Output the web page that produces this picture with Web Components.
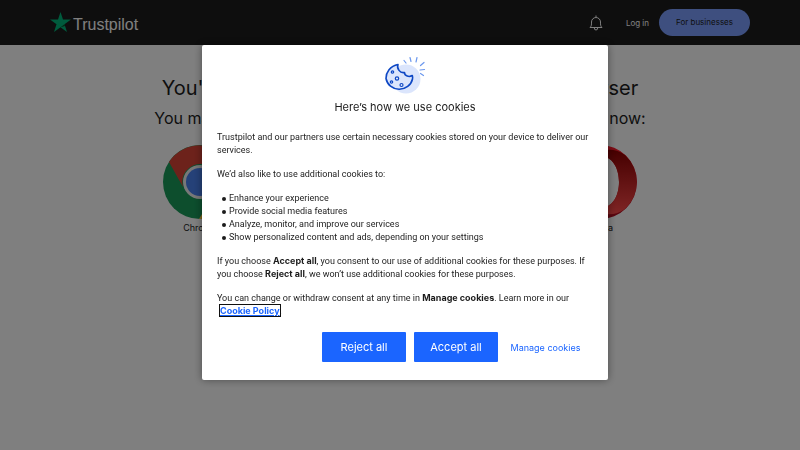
<!DOCTYPE html>
<html lang="en">
<head>
<meta charset="utf-8">
<meta name="viewport" content="width=device-width, initial-scale=1">
<title>Trustpilot</title>
<style>
    body {
        margin: 0;
        min-height: 100vh;
        background: #fff;
        color: #1c1c1c;
        font-family: Inter, "Liberation Sans", sans-serif;
    }
</style>
</head>
<body>
<tp-header></tp-header>
<tp-browsers>
    <span slot="title">You're using an old and unsupported web browser</span>
    <span slot="text">You may want to switch to one of these browsers and log in now:</span>
    <tp-browser>
        <svg slot="icon" viewBox="0 0 74 74" aria-hidden="true">
            <circle cx="37" cy="37" r="37" fill="#1a9c5b"/>
            <path d="M6 17A37 37 0 0 1 69 19H37A18 18 0 0 0 20 42Z" fill="#db4437"/>
            <path d="M69 19A37 37 0 0 1 36 74L53 46A18 18 0 0 0 37 19Z" fill="#ffcd40"/>
            <circle cx="37" cy="37" r="17" fill="#f1f1f1"/>
            <circle cx="37" cy="37" r="14" fill="#4a82f0"/>
        </svg>
        Chrome
    </tp-browser>
    <tp-browser>
        <svg slot="icon" viewBox="0 0 74 74" aria-hidden="true">
            <circle cx="37" cy="37" r="37" fill="#ff9400"/>
            <circle cx="39" cy="35" r="22" fill="#20306d"/>
        </svg>
        Firefox
    </tp-browser>
    <tp-browser>
        <svg slot="icon" viewBox="0 0 74 74" aria-hidden="true">
            <circle cx="37" cy="37" r="37" fill="#1e9bf0"/>
            <path d="M58 16L32 32L42 42Z" fill="#f33"/>
            <path d="M16 58L32 32L42 42Z" fill="#fff"/>
        </svg>
        Safari
    </tp-browser>
    <tp-browser>
        <svg slot="icon" viewBox="0 0 74 74" aria-hidden="true">
            <defs>
                <linearGradient id="ring" x2="0" y2="1">
                    <stop offset="0" stop-color="#ff1b2d"/>
                    <stop offset="1" stop-color="#b00d20"/>
                </linearGradient>
                <linearGradient id="side" x2="0" y2="1">
                    <stop offset="0" stop-color="#8c0000"/>
                    <stop offset="1" stop-color="#ff4b4b"/>
                </linearGradient>
            </defs>
            <path fill-rule="evenodd" d="M37 0A37 37 0 1 0 37 74A37 37 0 1 0 37 0ZM37 11C50 11 56 24 56 37S50 63 37 63S18 50 18 37S24 11 37 11Z" fill="url(#ring)"/>
            <path d="M25 16C33 4 50 1 62 10A37 37 0 0 1 62 64C50 73 33 70 25 58C29 62 33 63 37 63C50 63 56 50 56 37S50 11 37 11C33 11 29 12 25 16Z" fill="url(#side)"/>
        </svg>
        Opera
    </tp-browser>
</tp-browsers>
<cookie-dialog>
    <span slot="title">Here’s how we use cookies</span>
    <p>Trustpilot and our partners use certain necessary cookies stored on your device to deliver our services.</p>
    <p>We’d also like to use additional cookies to:</p>
    <cookie-list>
        <li>Enhance your experience</li>
        <li>Provide social media features</li>
        <li>Analyze, monitor, and improve our services</li>
        <li>Show personalized content and ads, depending on your settings</li>
    </cookie-list>
    <p>If you choose <strong-term>Accept all</strong-term>, you consent to our use of additional cookies for these purposes. If you choose <strong-term>Reject all</strong-term>, we won’t use additional cookies for these purposes.</p>
    <p>You can change or withdraw consent at any time in <strong-term>Manage cookies</strong-term>. Learn more in our <policy-link href="#cookies">Cookie Policy</policy-link>.</p>
    <cookie-button slot="actions">Reject all</cookie-button>
    <cookie-button slot="actions">Accept all</cookie-button>
    <cookie-button slot="actions" plain>Manage cookies</cookie-button>
</cookie-dialog>

<script>
class TpHeader extends HTMLElement {
    constructor() {
        super();
        this.attachShadow({ mode: 'open' });
        this.shadowRoot.innerHTML = `
        <style>
            :host {
                display: block;
                background: #1c1c1c;
                color: #fff;
            }
            header {
                display: flex;
                align-items: center;
                justify-content: space-between;
                height: 45px;
                padding: 0 50px;
            }
            a {
                color: inherit;
                text-decoration: none;
            }
            .logo {
                display: flex;
                align-items: center;
                gap: 2px;
                padding-top: 2px;
                font: 16px/20px "Liberation Sans", Arial, sans-serif;
            }
            .logo svg {
                width: 21px;
                height: 20px;
                margin-bottom: 4px;
            }
            .logo span {
                padding-top: 3px;
            }
            nav {
                display: flex;
                align-items: center;
                font-size: 8px;
            }
            .bell {
                padding: 0;
                border: 0;
                background: none;
                color: inherit;
                line-height: 0;
            }
            .bell svg {
                width: 14px;
                height: 16px;
            }
            .login {
                margin: 0 10px 0 23px;
            }
            .business {
                padding: 0 17px;
                border-radius: 14px;
                background: #7c9fff;
                color: #1c1c1c;
                line-height: 27px;
            }
        </style>
        <header>
            <a class="logo" href="#home">
                <svg viewBox="0 0 21 20" aria-hidden="true">
                    <path fill="#00b67a" d="M10.5 0L13 7.6H21L14.5 12.3L17 20L10.5 15.3L4 20L6.5 12.3L0 7.6H8Z"/>
                    <path fill="#005128" d="M14.5 12.3L15.1 14L10.5 15.3Z"/>
                </svg>
                <span>Trustpilot</span>
            </a>
            <nav>
                <button class="bell" aria-label="Notifications">
                    <svg viewBox="0 0 14 16" fill="none" stroke="currentColor" aria-hidden="true">
                        <path d="M7 .5V2M1 12.5H13C11.5 11 11.5 10 11.5 7A4.5 4.5 0 0 0 2.5 7C2.5 10 2.5 11 1 12.5ZM5.3 13A1.7 2 0 0 0 8.7 13"/>
                    </svg>
                </button>
                <a class="login" href="#login">Log in</a>
                <a class="business" href="#business">For businesses</a>
            </nav>
        </header>
        `;
    }
}

class TpBrowsers extends HTMLElement {
    constructor() {
        super();
        this.attachShadow({ mode: 'open' });
        this.shadowRoot.innerHTML = `
        <style>
            :host {
                display: flex;
                flex-direction: column;
                align-items: center;
                padding-top: 30px;
                text-align: center;
            }
            h1, h2 {
                margin: 0;
                font-weight: 400;
            }
            h1 {
                font-size: 20px;
                line-height: 26px;
            }
            h2 {
                margin-top: 6px;
                font-size: 16px;
                line-height: 22px;
            }
            .row {
                display: flex;
                justify-content: space-between;
                width: 474px;
                max-width: 100%;
                margin-top: 16px;
            }
        </style>
        <h1><slot name="title"></slot></h1>
        <h2><slot name="text"></slot></h2>
        <div class="row"><slot></slot></div>
        `;
    }
}

class TpBrowser extends HTMLElement {
    constructor() {
        super();
        this.attachShadow({ mode: 'open' });
        this.shadowRoot.innerHTML = `
        <style>
            :host {
                display: flex;
                flex-direction: column;
                gap: 3px;
                width: 74px;
                font-size: 9px;
                line-height: 12px;
            }
            ::slotted(svg) {
                display: block;
                width: 74px;
                height: 74px;
            }
        </style>
        <slot name="icon"></slot>
        <div><slot></slot></div>
        `;
    }
}

class CookieDialog extends HTMLElement {
    constructor() {
        super();
        this.attachShadow({ mode: 'open' });
        this.shadowRoot.innerHTML = `
        <style>
            :host {
                position: fixed;
                inset: 0;
                display: grid;
                justify-content: center;
                align-items: start;
                padding: 10vh 0 0 10px;
                background: rgba(0, 0, 0, 0.5);
            }
            .dialog {
                box-sizing: border-box;
                width: 406px;
                max-width: 100%;
                padding: 11px 15px 18px;
                border-radius: 2px;
                background: #fff;
                box-shadow: 0 0 8px rgba(0, 0, 0, 0.4);
            }
            .cookie {
                display: block;
                width: 42px;
                height: 39px;
                margin: 0 auto;
            }
            h2 {
                margin: 4px 0 16px;
                font-size: 11px;
                font-weight: 400;
                line-height: 16px;
                text-align: center;
            }
            .text {
                display: flex;
                flex-direction: column;
                gap: 11px;
                font-family: Roboto, sans-serif;
                font-size: 9px;
                line-height: 13px;
            }
            ::slotted(p) {
                margin: 0;
            }
            .actions {
                display: flex;
                justify-content: flex-end;
                gap: 8px;
                margin-top: 14px;
            }
        </style>
        <section class="dialog" role="dialog" aria-modal="true" aria-labelledby="title">
            <svg class="cookie" viewBox="0 0 42 39" fill="none" aria-hidden="true">
                <circle cx="22" cy="23" r="14.5" fill="#dbe5fc"/>
                <path d="M14 8.5C6 10 2 16.500 2 22.500A13.500 13 0 0 0 28.500 23C28.800 21.500 28.600 20.500 28.300 19.500C25 21.500 20.500 20 20.500 16.500C16 17.500 12.500 12.500 14 8.500Z" fill="#dbe5fc" stroke="#0d47c4" stroke-width="1.6" stroke-linejoin="round"/>
                <g stroke="#0d47c4" stroke-width="1.2">
                    <circle cx="8.5" cy="16" r="1.2"/>
                    <circle cx="13" cy="22.500" r="1.700"/>
                    <circle cx="7.500" cy="26" r="1.200"/>
                    <circle cx="17.500" cy="29" r="1.500"/>
                </g>
                <path d="M20 4.500L22 7M26 1.500L27 5.500M33 1.500L32 6M40 6.500L36.500 9.500M36 14L40.500 13.500M36.500 17.500L39.500 19.500" stroke="#6c98ee" stroke-width="1.2" stroke-linecap="round"/>
            </svg>
            <h2 id="title"><slot name="title"></slot></h2>
            <div class="text"><slot></slot></div>
            <div class="actions"><slot name="actions"></slot></div>
        </section>
        `;
    }
}

class CookieList extends HTMLElement {
    constructor() {
        super();
        this.attachShadow({ mode: 'open' });
        this.shadowRoot.innerHTML = `
        <style>
            :host {
                display: block;
            }
            ul {
                margin: 0;
                padding-left: 5px;
            }
            ::slotted(li) {
                display: flex;
                align-items: center;
                gap: 3px;
            }
            ::slotted(li)::before {
                content: "";
                width: 4px;
                height: 4px;
                border-radius: 50%;
                background: currentColor;
            }
        </style>
        <ul><slot></slot></ul>
        `;
    }
}

class StrongTerm extends HTMLElement {
    constructor() {
        super();
        this.attachShadow({ mode: 'open' });
        this.shadowRoot.innerHTML = `
        <style>
            b {
                font-family: Inter, sans-serif;
                line-height: 1;
            }
        </style>
        <b><slot></slot></b>`;
    }
}

class PolicyLink extends HTMLElement {
    constructor() {
        super();
        this.attachShadow({ mode: 'open' });
        this.shadowRoot.innerHTML = `
        <style>
            :host {
                margin-left: 3px;
                white-space: nowrap;
            }
            a {
                color: #1b65ff;
                font-family: Inter, sans-serif;
                font-weight: 700;
                line-height: 1;
                outline: 1px solid #101010;
            }
        </style>
        <a><slot></slot></a>`;
    }
    connectedCallback() {
        this.shadowRoot.querySelector('a').href = this.getAttribute('href');
    }
}

class CookieButton extends HTMLElement {
    constructor() {
        super();
        this.attachShadow({ mode: 'open' });
        this.shadowRoot.innerHTML = `
        <style>
            :host {
                display: block;
            }
            button {
                width: 84px;
                height: 30px;
                padding: 0;
                border: 0;
                border-radius: 1px;
                background: #1b65ff;
                color: #fff;
                font-family: inherit;
                font-size: 11px;
                cursor: pointer;
            }
            :host([plain]) button {
                width: 87px;
                padding-right: 8px;
                background: none;
                color: #1b65ff;
                font-size: 9px;
            }
        </style>
        <button type="button"><slot></slot></button>
        `;
    }
}

customElements.define('tp-header', TpHeader);
customElements.define('tp-browsers', TpBrowsers);
customElements.define('tp-browser', TpBrowser);
customElements.define('cookie-dialog', CookieDialog);
customElements.define('cookie-list', CookieList);
customElements.define('strong-term', StrongTerm);
customElements.define('policy-link', PolicyLink);
customElements.define('cookie-button', CookieButton);
</script>
</body>
</html>
